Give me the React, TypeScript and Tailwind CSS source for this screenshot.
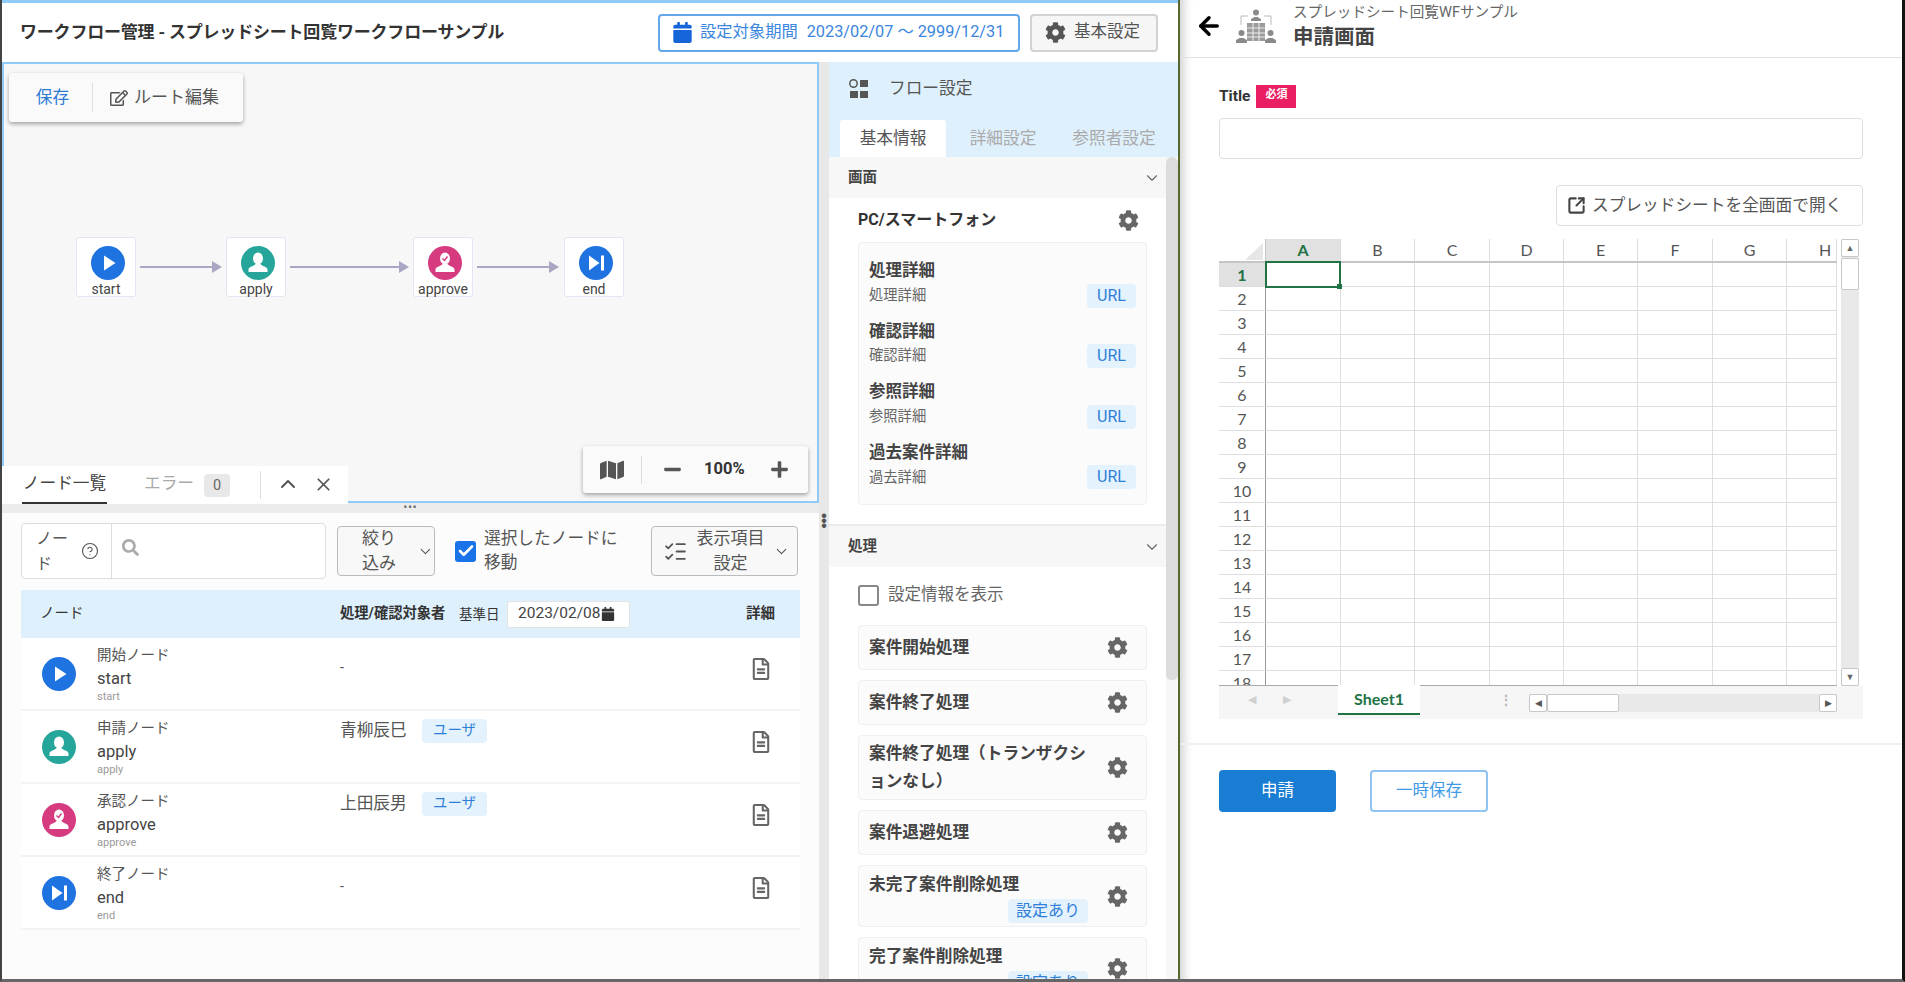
import React from "react";
import { FaCalendar, FaCog, FaMap, FaRegEdit, FaRegFileAlt, FaSearch, FaMinus, FaPlus } from "react-icons/fa";
import { ChevronDown, ChevronUp, X, CircleHelp, ListChecks, ArrowLeft, SquareArrowOutUpRight, Check } from "lucide-react";

type Kind = "start" | "apply" | "approve" | "end";

function NodeGlyph({ kind, size = 34 }: { kind: Kind; size?: number }) {
  const color = kind === "apply" ? "#26a69a" : kind === "approve" ? "#d63a7f" : "#1f73e0";
  return (
    <svg width={size} height={size} viewBox="0 0 34 34" className="shrink-0">
      <circle cx="17" cy="17" r="17" fill={color} />
      {kind === "start" && <polygon points="13,9.5 24.5,17 13,24.5" fill="#fff" />}
      {kind === "end" && (
        <g fill="#fff">
          <polygon points="10,9.5 20.5,17 10,24.5" />
          <rect x="22" y="9.5" width="3" height="15" />
        </g>
      )}
      {(kind === "apply" || kind === "approve") && (
        <g fill="#fff">
          <ellipse cx="17" cy="12.5" rx="5" ry="6" />
          <path d="M7.5 23.5c0-3 6-3.3 7-5.5h5c1 2.2 7 2.5 7 5.5v2.5h-19z" />
        </g>
      )}
      {kind === "approve" && (
        <path d="M14.5 12.5l2 2 3-4" stroke={color} strokeWidth="1.4" fill="none" />
      )}
    </svg>
  );
}

function FlowNode({ kind, x }: { kind: Kind; x: number }) {
  return (
    <div
      className="absolute top-[173px] flex h-[60px] w-[60px] flex-col items-center rounded-[3px] border border-[#e6e3f3] bg-white pt-[8px]"
      style={{ left: x }}
    >
      <div className="ml-[3px]">
        <NodeGlyph kind={kind} />
      </div>
      <span className="mt-[-1px] text-[14px] leading-[20px] text-[#444]">{kind}</span>
    </div>
  );
}

function Edge({ x, w }: { x: number; w: number }) {
  return (
    <svg className="absolute top-[197px]" style={{ left: x }} width={w} height="12" viewBox={`0 0 ${w} 12`}>
      <rect x="0" y="5" width={w - 8} height="2" fill="#aaa7c4" />
      <polygon points={`${w - 10},0 ${w},6 ${w - 10},12`} fill="#aaa7c4" />
    </svg>
  );
}

function Pill({ children, className = "" }: { children: React.ReactNode; className?: string }) {
  return (
    <span className={`inline-flex h-[24px] items-center justify-center rounded-[4px] bg-[#e3f2fd] text-[#2f7fd8] ${className}`}>
      {children}
    </span>
  );
}

function SectionHead({ title }: { title: string }) {
  return (
    <div className="flex h-[41px] items-center justify-between bg-[#f7f7f7] pl-[19px] pr-[5px]">
      <span className="text-[14.5px] font-bold text-[#444]">{title}</span>
      <ChevronDown size={18} strokeWidth={1.5} className="text-[#666]" />
    </div>
  );
}

function GearCard({ h, children }: { h: number; children: React.ReactNode }) {
  return (
    <div
      className="ml-[29px] mr-[19px] flex shrink-0 items-center justify-between rounded-[4px] border border-[#efefef] bg-[#fbfbfb] pl-[10px] pr-[18px] text-[16.7px] font-bold leading-[28px] text-[#444]"
      style={{ height: h }}
    >
      <div className="min-w-0">{children}</div>
      <FaCog size={21} className="shrink-0 text-[#666]" />
    </div>
  );
}

const urlItems = [
  ["処理詳細", "処理詳細"],
  ["確認詳細", "確認詳細"],
  ["参照詳細", "参照詳細"],
  ["過去案件詳細", "過去詳細"],
];

const rows: { kind: Kind; label: string; name: string; who: string }[] = [
  { kind: "start", label: "開始ノード", name: "start", who: "" },
  { kind: "apply", label: "申請ノード", name: "apply", who: "青柳辰巳" },
  { kind: "approve", label: "承認ノード", name: "approve", who: "上田辰男" },
  { kind: "end", label: "終了ノード", name: "end", who: "" },
];

const colWidths = [75, 74, 75, 74, 74, 75, 74, 50];
const colNames = ["A", "B", "C", "D", "E", "F", "G", "H"];
const rowNums = Array.from({ length: 18 }, (_, i) => i + 1);

function Sheet() {
  return (
    <div className="flex h-[481px] w-[644px] flex-col bg-white [font-family:Lato,'Liberation_Sans',sans-serif]">
      <div className="flex h-[447px]">
        <div className="h-[447px] w-[618px] overflow-hidden border-b border-[#aaa]">
          <div className="flex h-[24px] border-b-2 border-[#c6c6c6]">
            <div className="relative h-full w-[47px] shrink-0 border-r border-[#c6c6c6]">
              <svg className="absolute right-[2px] top-[4px]" width="18" height="17" viewBox="0 0 18 17">
                <polygon points="18,0 18,17 0,17" fill="#e6e6e6" />
              </svg>
            </div>
            {colNames.map((c, i) => (
              <div
                key={c}
                className={`flex shrink-0 items-center border-r border-[#dcdcdc] text-[16px] ${
                  i === 7 ? "justify-start pl-[32px]" : "justify-center"
                } ${i === 0 ? "bg-[#e1e1e1] font-bold text-[#217346]" : "text-[#555]"}`}
                style={{ width: colWidths[i] }}
              >
                {c}
              </div>
            ))}
          </div>
          {rowNums.map((n) => (
            <div key={n} className="flex h-[24px]">
              <div
                className={`flex w-[47px] shrink-0 items-center justify-center border-b border-r border-b-[#dedede] border-r-[#999] text-[16px] ${
                  n === 1 ? "bg-[#e1e1e1] font-bold text-[#217346]" : "text-[#555]"
                }`}
              >
                {n}
              </div>
              {colNames.map((c, i) => (
                <div
                  key={c}
                  className="relative shrink-0 border-b border-r border-[#dedede]"
                  style={{ width: colWidths[i] }}
                >
                  {n === 1 && i === 0 && (
                    <div className="absolute -inset-x-[1px] -inset-y-[2px] z-10 border-2 border-[#217346]">
                      <div className="absolute -bottom-[3px] -right-[3px] h-[5px] w-[5px] bg-[#217346]" />
                    </div>
                  )}
                </div>
              ))}
            </div>
          ))}
        </div>
        <div className="ml-[4px] flex h-[447px] w-[18px] flex-col bg-[#e9e9e9]">
          <div className="flex h-[18px] items-center justify-center rounded-[2px] border border-[#c8c8c8] bg-white text-[9px] text-[#666]">▲</div>
          <div className="mt-px h-[32px] rounded-[2px] border border-[#c8c8c8] bg-white" />
          <div className="flex-1" />
          <div className="flex h-[18px] items-center justify-center rounded-[2px] border border-[#c8c8c8] bg-white text-[9px] text-[#666]">▼</div>
        </div>
      </div>
      <div className="flex h-[33px] items-start bg-[#f6f6f6]">
        <div className="flex h-[27px] w-[119px] items-center gap-[27px] pl-[29px] text-[11px] text-[#d0d0d0]">
          <span>◀</span>
          <span>▶</span>
        </div>
        <div className="-mt-px flex h-[30px] w-[82px] items-center justify-center border-b-2 border-[#217346] bg-white text-[16px] font-bold text-[#217346]">
          Sheet1
        </div>
        <div className="flex h-[27px] w-[109px] items-center justify-end pr-[16px] text-[14px] font-bold leading-none text-[#bbb]">⋮</div>
        <div className="mt-[8px] flex h-[18px] w-[308px] bg-[#e9e9e9]">
          <div className="flex w-[18px] items-center justify-center rounded-[2px] border border-[#c8c8c8] bg-white text-[9px] text-[#555]">◀</div>
          <div className="w-[72px] rounded-[2px] border border-[#c8c8c8] bg-white" />
          <div className="flex-1" />
          <div className="flex w-[18px] items-center justify-center rounded-[2px] border border-[#c8c8c8] bg-white text-[9px] text-[#555]">▶</div>
        </div>
      </div>
    </div>
  );
}

function Canvas() {
  return (
    <div className="relative h-[441px] w-[817px] shrink-0 border-2 border-[#90caf9] bg-[#f7f7f7]">
      <div className="absolute left-[5px] top-[9px] flex h-[49px] w-[234px] items-center rounded-[3px] bg-[#fafafa] text-[16.7px] shadow-[0_2px_4px_rgba(0,0,0,0.35)]">
        <span className="flex h-[29px] w-[84px] items-center justify-center border-r border-[#ddd] pl-[4px] text-[#2f7bd4]">保存</span>
        <span className="flex items-center gap-[6px] pl-[17px] text-[#555]">
          <FaRegEdit size={18} />
          <span className="text-[17px]">ルート編集</span>
        </span>
      </div>
      <FlowNode kind="start" x={72} />
      <Edge x={136} w={82} />
      <FlowNode kind="apply" x={222} />
      <Edge x={286} w={119} />
      <FlowNode kind="approve" x={409} />
      <Edge x={473} w={82} />
      <FlowNode kind="end" x={560} />
      <div className="absolute left-[579px] top-[382px] flex h-[47px] w-[225px] items-center rounded-[3px] bg-[#fafafa] text-[#555] shadow-[0_2px_4px_rgba(0,0,0,0.35)]">
        <span className="flex h-[28px] w-[59px] items-center justify-center border-r border-[#ddd]">
          <FaMap size={24} />
        </span>
        <FaMinus size={19} className="ml-[21px]" />
        <span className="ml-[22px] text-[16.5px] font-bold text-[#333]">100%</span>
        <FaPlus size={19} className="ml-[25px]" />
      </div>
      <div className="absolute -bottom-[3px] -left-[2px] flex h-[38px] w-[346px] bg-white">
        <div className="ml-[20px] flex h-[38px] w-[85px] items-center justify-center whitespace-nowrap border-b-2 border-[#333] text-[16.7px] text-[#444]">ノード一覧</div>
        <span className="ml-[37px] flex items-center pb-[2px] text-[16.7px] text-[#aaa]">エラー</span>
        <span className="ml-[10px] mt-[8px] flex h-[23px] w-[26px] items-center justify-center rounded-[4px] bg-[#e8e8e8] text-[14.5px] text-[#666]">0</span>
        <span className="ml-[30px] mt-[5px] h-[28px] border-l border-[#ddd]" />
        <ChevronUp size={24} className="ml-[15px] mt-[6px] text-[#555]" />
        <X size={21} className="ml-[13px] mt-[8px] text-[#555]" />
      </div>
    </div>
  );
}

function NodeList() {
  return (
    <div className="flex min-h-0 flex-1 flex-col bg-[#fcfcfc] px-[19px]">
      <div className="mt-[10px] flex h-[56px] items-center text-[16px] leading-[25px] text-[#555]">
        <div className="flex h-[56px] w-[305px] rounded-[4px] border border-[#ddd] bg-white">
          <div className="flex w-[90px] items-center border-r border-[#ddd] pl-[14px]">
            <span className="w-[45px] shrink-0">ノー<br />ド</span>
            <CircleHelp size={18} strokeWidth={1.5} className="shrink-0" />
          </div>
          <FaSearch size={17} className="ml-[10px] mt-[15px] text-[#aaa]" />
        </div>
        <div className="ml-[11px] flex h-[50px] w-[98px] items-center rounded-[4px] border border-[#bbb] bg-[#f8f8f8] pl-[24px]">
          <span className="w-[56px] text-[17px]">絞り<br />込み</span>
          <ChevronDown size={17} strokeWidth={1.5} />
        </div>
        <div className="ml-[20px] flex h-[21px] w-[21px] items-center justify-center rounded-[3px] bg-[#1a73e8]">
          <Check size={18} strokeWidth={3.5} className="text-white" />
        </div>
        <span className="ml-[8px] w-[167px] text-[16.7px] leading-[24px]">選択したノードに<br />移動</span>
        <div className="flex h-[50px] w-[147px] items-center rounded-[4px] border border-[#bbb] bg-[#f8f8f8] pl-[11px]">
          <ListChecks size={25} strokeWidth={1.7} />
          <span className="w-[85px] text-center text-[17px]">表示項目<br />設定</span>
          <ChevronDown size={17} strokeWidth={1.5} />
        </div>
      </div>
      <div className="mt-[11px] flex h-[48px] items-center bg-[#dff0fd] text-[#333]">
        <span className="ml-[19px] w-[300px] text-[14.5px]">ノード</span>
        <span className="w-[119px] text-[14.3px] font-bold">処理/確認対象者</span>
        <span className="w-[48px] text-[13.5px]">基準日</span>
        <span className="flex h-[27px] w-[123px] items-center rounded-[3px] border border-[#e3e3e3] bg-white pl-[10px] text-[15.5px] text-[#444]">
          2023/02/08
          <FaCalendar size={14} className="ml-[1px] text-[#333]" />
        </span>
        <span className="ml-[116px] text-[14.5px] font-bold">詳細</span>
      </div>
      {rows.map((r) => (
        <div key={r.kind} className="flex h-[73px] border-b-2 border-[#f3f3f3] bg-white">
          <div className="flex w-[319px] items-center pl-[21px]">
            <NodeGlyph kind={r.kind} />
            <div className="ml-[21px] flex flex-col">
              <span className="h-[22px] text-[14.5px] leading-[22px] text-[#555]">{r.label}</span>
              <span className="h-[22px] text-[16.5px] leading-[24px] text-[#444]">{r.name}</span>
              <span className="h-[14px] text-[11px] leading-[16px] text-[#999]">{r.name}</span>
            </div>
          </div>
          <div className="flex w-[384px] items-start">
            {r.who ? (
              <div className="mt-[7px] flex items-center">
                <span className="w-[82px] text-[16.7px] text-[#555]">{r.who}</span>
                <Pill className="w-[65px] text-[14.5px]">ユーザ</Pill>
              </div>
            ) : (
              <span className="mt-[18px] text-[14.5px] leading-[24px] text-[#555]">-</span>
            )}
          </div>
          <div className="flex w-[74px] justify-center pt-[20px]">
            <FaRegFileAlt size={22} className="text-[#666]" />
          </div>
        </div>
      ))}
    </div>
  );
}

function FlowSettings() {
  return (
    <div className="flex h-full w-[349px] shrink-0 flex-col">
      <div className="h-[95px] shrink-0 bg-[#dff0fd]">
        <div className="flex h-[58px] items-center pb-[5px] pl-[20px]">
          <svg width="20" height="20" viewBox="0 0 20 20" className="text-[#555]">
            <circle cx="4.5" cy="4.5" r="3.7" fill="none" stroke="currentColor" strokeWidth="1.5" />
            <rect x="11" y="1" width="8" height="7" fill="currentColor" />
            <rect x="1" y="12" width="8" height="7" fill="currentColor" />
            <rect x="11" y="12" width="8" height="7" fill="currentColor" />
          </svg>
          <span className="ml-[20px] text-[16.7px] text-[#555]">フロー設定</span>
        </div>
        <div className="flex h-[37px] pl-[11px] text-[16.7px] text-[#aaa]">
          <span className="flex w-[106px] items-center justify-center rounded-t-[3px] bg-white text-[#555]">基本情報</span>
          <span className="flex w-[114px] items-center justify-center">詳細設定</span>
          <span className="flex w-[108px] items-center justify-center">参照者設定</span>
        </div>
      </div>
      <div className="flex min-h-0 flex-1">
        <div className="min-w-0 flex-1 overflow-hidden bg-white">
          <SectionHead title="画面" />
          <div className="flex h-[44px] items-center justify-between pl-[29px] pr-[27px]">
            <span className="text-[16px] font-bold text-[#333]">PC/スマートフォン</span>
            <FaCog size={21} className="text-[#666]" />
          </div>
          <div className="ml-[29px] mr-[19px] h-[263px] rounded-[4px] border border-[#efefef] bg-[#fbfbfb] pl-[10px] pr-[10px] pt-[15px]">
            {urlItems.map(([a, b]) => (
              <div key={a} className="h-[60.6px]">
                <div className="h-[25px] text-[16.5px] font-bold leading-[25px] text-[#444]">{a}</div>
                <div className="flex h-[25px] items-center justify-between text-[14.3px] text-[#666]">
                  {b}
                  <Pill className="w-[49px] text-[16px]">URL</Pill>
                </div>
              </div>
            ))}
          </div>
          <div className="mt-[19px] border-t-2 border-[#ececec]">
            <SectionHead title="処理" />
          </div>
          <div className="flex h-[58px] items-center pb-[1px] pl-[29px]">
            <span className="h-[21px] w-[21px] rounded-[3px] border-2 border-[#888] bg-white" />
            <span className="ml-[9px] text-[16.5px] text-[#666]">設定情報を表示</span>
          </div>
          <div className="flex flex-col gap-[10px]">
            <GearCard h={45}>案件開始処理</GearCard>
            <GearCard h={45}>案件終了処理</GearCard>
            <GearCard h={65}>案件終了処理（トランザクシ<br />ョンなし）</GearCard>
            <GearCard h={45}>案件退避処理</GearCard>
            <GearCard h={62}>
              <div className="flex w-[219px] flex-col pt-[2px]">
                <span className="leading-[26px]">未完了案件削除処理</span>
                <Pill className="mt-[1px] w-[80px] self-end text-[16px] font-normal">設定あり</Pill>
              </div>
            </GearCard>
            <GearCard h={62}>
              <div className="flex w-[219px] flex-col pt-[2px]">
                <span className="leading-[26px]">完了案件削除処理</span>
                <Pill className="mt-[1px] w-[80px] self-end text-[16px] font-normal">設定あり</Pill>
              </div>
            </GearCard>
          </div>
        </div>
        <div className="w-[12px] shrink-0 bg-[#f7f7f7]">
          <div className="h-[523px] rounded-t-[6px] rounded-b-[5px] bg-[#dcdcdc]" />
        </div>
      </div>
    </div>
  );
}

function ApplyIcon() {
  return (
    <svg width="40" height="36" viewBox="0 0 40 36" className="text-[#8a8a8a]">
      <g fill="currentColor">
        <circle cx="20" cy="3.5" r="3" />
        <path d="M15 11c0-2 3-2 3.5-3h3c.5 1 3.5 1 3.5 3v1H15z" />
        <circle cx="5.5" cy="24" r="3" />
        <path d="M0 32c0-2 3-2 3.5-3h4c.5 1 3.5 1 3.5 3v2H0z" />
        <circle cx="34.5" cy="24" r="3" />
        <path d="M29 32c0-2 3-2 3.5-3h4c.5 1 3.5 1 3.5 3v2H29z" />
        <path d="M11 14h18v18H11z" fillOpacity="0.85" />
      </g>
      <path d="M11 19h18M11 24h18M11 28h18M17 14v18M23 14v18" stroke="#fff" strokeWidth="0.8" />
      <path d="M5 16V7h7M35 16V7h-7" fill="none" stroke="#bbb" strokeWidth="1" />
    </svg>
  );
}

function ApplyPanel() {
  return (
    <div className="flex h-full min-w-0 flex-1 flex-col bg-white shadow-[inset_12px_0_10px_-8px_rgba(0,0,0,0.18)]">
      <div className="flex h-[58px] shrink-0 items-center border-b border-[#e2e2e2] pb-[4px] pl-[15px]">
        <ArrowLeft size={28} strokeWidth={3} className="-mt-[1px] text-black" />
        <div className="ml-[13px]">
          <ApplyIcon />
        </div>
        <div className="ml-[17px] -mt-[2px] flex flex-col">
          <span className="text-[14.6px] leading-[22px] text-[#666]">スプレッドシート回覧WFサンプル</span>
          <span className="text-[20.5px] font-bold leading-[28px] text-[#444]">申請画面</span>
        </div>
      </div>
      <div className="flex flex-col px-[39px]">
        <div className="mt-[27px] flex h-[23px] items-center">
          <span className="text-[15.5px] font-bold text-[#333]">Title</span>
          <span className="ml-[6px] flex h-[23px] w-[40px] items-center justify-center bg-[#e91e63] pb-[3px] text-[11px] font-bold text-white">必須</span>
        </div>
        <div className="mt-[10px] h-[41px] rounded-[4px] border border-[#dedede] bg-white" />
        <div className="mt-[26px] flex h-[41px] w-[307px] items-center gap-[6px] self-end rounded-[4px] border border-[#dedede] bg-white pl-[10px] text-[16.7px] text-[#555]">
          <SquareArrowOutUpRight size={19} strokeWidth={2.6} className="text-[#444]" />
          スプレッドシートを全画面で開く
        </div>
        <div className="mt-[13px]">
          <Sheet />
        </div>
      </div>
      <div className="mt-[23px] border-t-2 border-[#f0f0f0] px-[39px] pt-[25px]">
        <div className="flex gap-[34px]">
          <span className="flex h-[42px] w-[117px] items-center justify-center rounded-[4px] bg-[#1a7dd4] text-[16.5px] text-white">申請</span>
          <span className="flex h-[42px] w-[118px] items-center justify-center rounded-[4px] border-2 border-[#90c4f0] bg-white text-[16.5px] text-[#3f9ae6]">一時保存</span>
        </div>
      </div>
    </div>
  );
}

export default function App() {
  return (
    <div className="flex h-[982px] w-[1905px] overflow-hidden border-b-[3px] border-l-2 border-r-[3px] border-b-[#666] border-l-[#444] border-r-[#111] bg-white [font-family:Roboto,'Noto_Sans_CJK_JP',sans-serif]">
      <div className="flex h-full w-[1176px] shrink-0 flex-col">
        <div className="flex h-[62px] shrink-0 items-center border-t-[3px] border-[#90caf9] bg-white">
          <span className="ml-[18px] w-[638px] text-[17px] font-bold tracking-[-0.2px] text-[#333]">ワークフロー管理 - スプレッドシート回覧ワークフローサンプル</span>
          <div className="flex h-[38px] w-[362px] items-center rounded-[4px] border-2 border-[#64a8ec] bg-white pl-[12px] text-[16.3px] text-[#3b86de]">
            <FaCalendar size={21} className="text-[#1565d8]" />
            <span className="ml-[7px]">設定対象期間</span>
            <span className="ml-[9px] whitespace-nowrap">2023/02/07 ～ 2999/12/31</span>
          </div>
          <div className="ml-[10px] flex h-[38px] w-[128px] items-center rounded-[4px] border-2 border-[#d2d2d2] bg-[#f6f6f6] pl-[13px] text-[16.5px] text-[#555]">
            <FaCog size={21} className="text-[#555]" />
            <span className="ml-[8px]">基本設定</span>
          </div>
        </div>
        <div className="flex min-h-0 flex-1">
          <div className="flex h-full w-[817px] shrink-0 flex-col">
            <Canvas />
            <div className="flex h-[10px] shrink-0 items-center justify-center bg-[#ececec] text-[10px] font-bold tracking-[1px] leading-none text-[#666]">•••</div>
            <NodeList />
          </div>
          <div className="flex h-full w-[10px] shrink-0 flex-col items-center bg-[#e8e8e8] pt-[451px] text-[5px] leading-[5px] text-[#555]">
            <span>●</span>
            <span>●</span>
            <span>●</span>
          </div>
          <FlowSettings />
        </div>
      </div>
      <div className="h-full w-[2px] shrink-0 bg-[#55692f]" />
      <ApplyPanel />
    </div>
  );
}
